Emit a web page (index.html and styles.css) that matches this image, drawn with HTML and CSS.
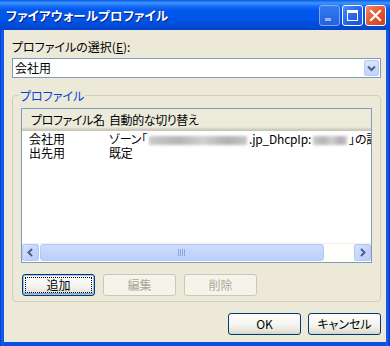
FILE: index.html
```html
<!DOCTYPE html>
<html lang="ja">
<head>
    <meta charset="UTF-8">
    <meta name="viewport" content="width=device-width, initial-scale=1.0">
    <title>ファイアウォールプロファイル</title>
    <link rel="stylesheet" href="styles.css">
</head>
<body>
    <div class="window">
        <div class="titlebar">
            <span class="title">ファイアウォールプロファイル</span>
            <div class="caption-buttons">
                <span class="cap cap-min">
                    <svg width="19" height="19" viewBox="0 0 19 19"><rect x="5" y="12" width="6" height="3" fill="#b9c9f4"/></svg>
                </span>
                <span class="cap cap-max">
                    <svg width="19" height="19" viewBox="0 0 19 19"><rect x="4.5" y="4.5" width="10" height="10" fill="none" stroke="#fff" stroke-width="1"/><rect x="4" y="4" width="11" height="3" fill="#fff"/></svg>
                </span>
                <span class="cap cap-close">
                    <svg width="19" height="19" viewBox="0 0 19 19"><path d="M5 5 L14 14 M14 5 L5 14" stroke="#fff" stroke-width="2.2" stroke-linecap="square"/></svg>
                </span>
            </div>
        </div>

        <div class="client">
            <div class="field-label">プロファイルの選択(<u>E</u>):</div>
            <div class="combo">
                <span class="combo-text">会社用</span>
                <span class="combo-btn">
                    <svg width="15" height="16" viewBox="0 0 15 16"><path d="M4 6.5 L7.5 10 L11 6.5" fill="none" stroke="#4d6185" stroke-width="2"/></svg>
                </span>
            </div>

            <fieldset class="group">
                <legend>プロファイル</legend>
                <div class="listview">
                    <div class="lv-header">
                        <span class="hcol hcol-1">プロファイル名</span>
                        <span class="hcol hcol-2">自動的な切り替え</span>
                    </div>
                    <div class="lv-body">
                        <div class="lv-row">
                            <span class="cell cell-1">会社用</span>
                            <span class="cell cell-2">ゾーン「<span class="blur blur-long"></span>.jp_DhcpIp:<span class="blur blur-short"></span>」の設定</span>
                        </div>
                        <div class="lv-row">
                            <span class="cell cell-1">出先用</span>
                            <span class="cell cell-2">既定</span>
                        </div>
                    </div>
                    <div class="hscroll">
                        <span class="sb-btn">
                            <svg width="15" height="15" viewBox="0 0 15 15"><path d="M9 4 L5.5 7.5 L9 11" fill="none" stroke="#4d6185" stroke-width="2"/></svg>
                        </span>
                        <div class="sb-track">
                            <span class="sb-thumb">
                                <svg width="8" height="7" viewBox="0 0 8 7"><path d="M0.5 0 V7 M2.5 0 V7 M4.5 0 V7 M6.5 0 V7" stroke="#8ca7e6" stroke-width="1"/></svg>
                            </span>
                        </div>
                        <span class="sb-btn">
                            <svg width="15" height="15" viewBox="0 0 15 15"><path d="M6 4 L9.5 7.5 L6 11" fill="none" stroke="#4d6185" stroke-width="2"/></svg>
                        </span>
                    </div>
                </div>
                <div class="group-buttons">
                    <button class="btn btn-default">追加</button>
                    <button class="btn" disabled>編集</button>
                    <button class="btn" disabled>削除</button>
                </div>
            </fieldset>

            <div class="dialog-buttons">
                <button class="btn">OK</button>
                <button class="btn">キャンセル</button>
            </div>
        </div>
    </div>
</body>
</html>
```

FILE: styles.css
```css
/* Окно */
body {
    margin: 0;
    font-family: "Noto Sans CJK JP", "DejaVu Sans", sans-serif;
    font-size: 12px;
    color: #000;
}
.window {
    width: 390px;
    height: 346px;
    display: flex;
    flex-direction: column;
    background: linear-gradient(90deg, #0831d9 0, #1763ee 2px, #0a4fe0 4px, #0a4fe0 385px, #1a5fe6 387px, #0831d9 390px);
}

/* Заголовок */
.titlebar {
    height: 30px;
    flex: none;
    display: flex;
    align-items: center;
    justify-content: space-between;
    padding: 0 4px 0 6px;
    background: linear-gradient(#0a5ce6 0, #3d95ff 3px, #1a6ff5 6px, #0058ee 10px, #0055e5 20px, #0049d4 27px, #0044c8 30px);
}
.title {
    color: #fff;
    font-weight: bold;
    font-size: 12.5px;
    font-feature-settings: "palt";
    letter-spacing: 0.2px;
    text-shadow: 1px 1px 0 #0a1b85;
    margin-top: 1px;
}
.caption-buttons {
    display: flex;
    gap: 2px;
    margin-top: 1px;
}
.cap {
    width: 19px;
    height: 19px;
    border: 1px solid #fff;
    border-radius: 3px;
    display: block;
}
.cap svg {
    display: block;
}
.cap-min {
    background: linear-gradient(#3d7ff2, #2a66e0);
    border-color: #9bb6f0;
    opacity: 0.85;
}
.cap-max {
    background: linear-gradient(135deg, #4b8cf7, #2461e3 60%, #1c55d6);
}
.cap-close {
    background: linear-gradient(135deg, #f08a67, #e0532d 55%, #c9411f);
}

/* Клиентская область */
.client {
    flex: 1;
    margin: 0 4px 4px 4px;
    background-color: #ece9d8;
    padding: 10px 5px 0 8px;
    min-width: 0;
}
.field-label {
    line-height: 13px;
    height: 13px;
    font-feature-settings: "palt";
}
.combo {
    margin-top: 5px;
    height: 20px;
    box-sizing: border-box;
    border: 1px solid #7f9db9;
    background-color: #fff;
    display: flex;
    align-items: center;
    justify-content: space-between;
    padding: 0 1px 0 2px;
}
.combo-text {
    line-height: 16px;
}
.combo-btn {
    width: 15px;
    height: 16px;
    border: 1px solid #b9cbf3;
    border-radius: 2px;
    background: linear-gradient(#d9e5fd, #c1d3fb);
    box-sizing: border-box;
    display: flex;
    align-items: center;
    justify-content: center;
}
.combo-btn svg {
    flex: none;
}

/* Группа */
.group {
    margin: 11px 0 0 0;
    width: 369px;
    min-width: 0;
    box-sizing: border-box;
    border: 1px solid #d0d0bf;
    border-radius: 4px;
    padding: 6px 8px 5px 8px;
}
.group legend {
    color: #0046d5;
    line-height: 13px;
    padding: 0 1px;
    margin-left: -2px;
    font-feature-settings: "palt";
}

/* Список */
.listview {
    width: 351px;
    height: 155px;
    box-sizing: border-box;
    border: 1px solid #7f9db9;
    background-color: #fff;
    display: flex;
    flex-direction: column;
    overflow: hidden;
}
.lv-header {
    height: 22px;
    flex: none;
    display: flex;
    align-items: flex-start;
    background: linear-gradient(#ebeadb 0, #ebeadb 18px, #e2decd 19px, #d6d2c2 20px, #cbc7b8 21px);
    font-feature-settings: "palt";
    letter-spacing: -0.4px;
}
.hcol {
    white-space: nowrap;
    line-height: 13px;
    margin-top: 4px;
}
.hcol-1 {
    width: 79px;
    flex: none;
    box-sizing: border-box;
    padding-left: 9px;
    border-right: 1px solid #c7c5b2;
    box-shadow: 1px 0 0 #fff;
}
.hcol-2 {
    padding-left: 8px;
}
.lv-body {
    flex: 1;
    overflow: hidden;
    padding-top: 1px;
}
.lv-row {
    display: flex;
    height: 14px;
    line-height: 14px;
    white-space: nowrap;
}
.cell-1 {
    width: 80px;
    padding-left: 7px;
    flex: none;
    box-sizing: border-box;
}
.cell-2 {
    padding-left: 7px;
    font-feature-settings: "palt";
    letter-spacing: -0.2px;
}
.blur {
    display: inline-block;
    height: 9px;
    vertical-align: -1px;
    background: linear-gradient(90deg, #c9c9c9, #b4b4b4 30%, #cfcfcf 55%, #b0b0b0 80%, #c6c6c6);
    filter: blur(1.5px);
}
.blur-long {
    width: 98px;
    margin: 0 2px;
}
.blur-short {
    width: 34px;
    margin: 0 2px;
}

/* Полоса прокрутки */
.hscroll {
    height: 17px;
    flex: none;
    display: flex;
    background-color: #fefefb;
    border-top: 1px solid #f3f1ec;
    margin-bottom: 1px;
}
.sb-btn {
    width: 17px;
    height: 17px;
    flex: none;
    box-sizing: border-box;
    border: 1px solid #b4c8f6;
    border-radius: 2px;
    background: linear-gradient(135deg, #d4e1fd, #b9cdfa);
    display: flex;
    align-items: center;
    justify-content: center;
}
.sb-track {
    flex: 1;
    padding: 0 30px 0 1px;
}
.sb-thumb {
    display: flex;
    align-items: center;
    justify-content: center;
    height: 17px;
    box-sizing: border-box;
    border: 1px solid #b4c8f6;
    border-radius: 3px;
    background: linear-gradient(#cfdcfc, #bccffa);
}

/* Кнопки */
.btn {
    width: 73px;
    height: 22px;
    box-sizing: border-box;
    border: 1px solid #003c74;
    border-radius: 3px;
    background: linear-gradient(#ffffff, #f4f4f0 55%, #e6e4da 85%, #d8d2c6);
    font-family: "Noto Sans CJK JP", "DejaVu Sans", sans-serif;
    font-size: 12px;
    font-feature-settings: "palt";
    color: #000;
    padding: 0;
    line-height: 18px;
}
.btn:disabled {
    border-color: #c9c7ba;
    background: #f5f4ea;
    color: #aca899;
}
.btn-default {
    box-shadow: inset 0 0 0 1px #a6c1ee, inset 0 -1px 0 1px #7da2ce;
    outline: 1px dotted #000;
    outline-offset: -4px;
}
.group-buttons {
    margin-top: 11px;
    margin-left: 1px;
    display: flex;
    gap: 8px;
}
.dialog-buttons {
    margin-top: 11px;
    display: flex;
    justify-content: flex-end;
    gap: 7px;
}
```
